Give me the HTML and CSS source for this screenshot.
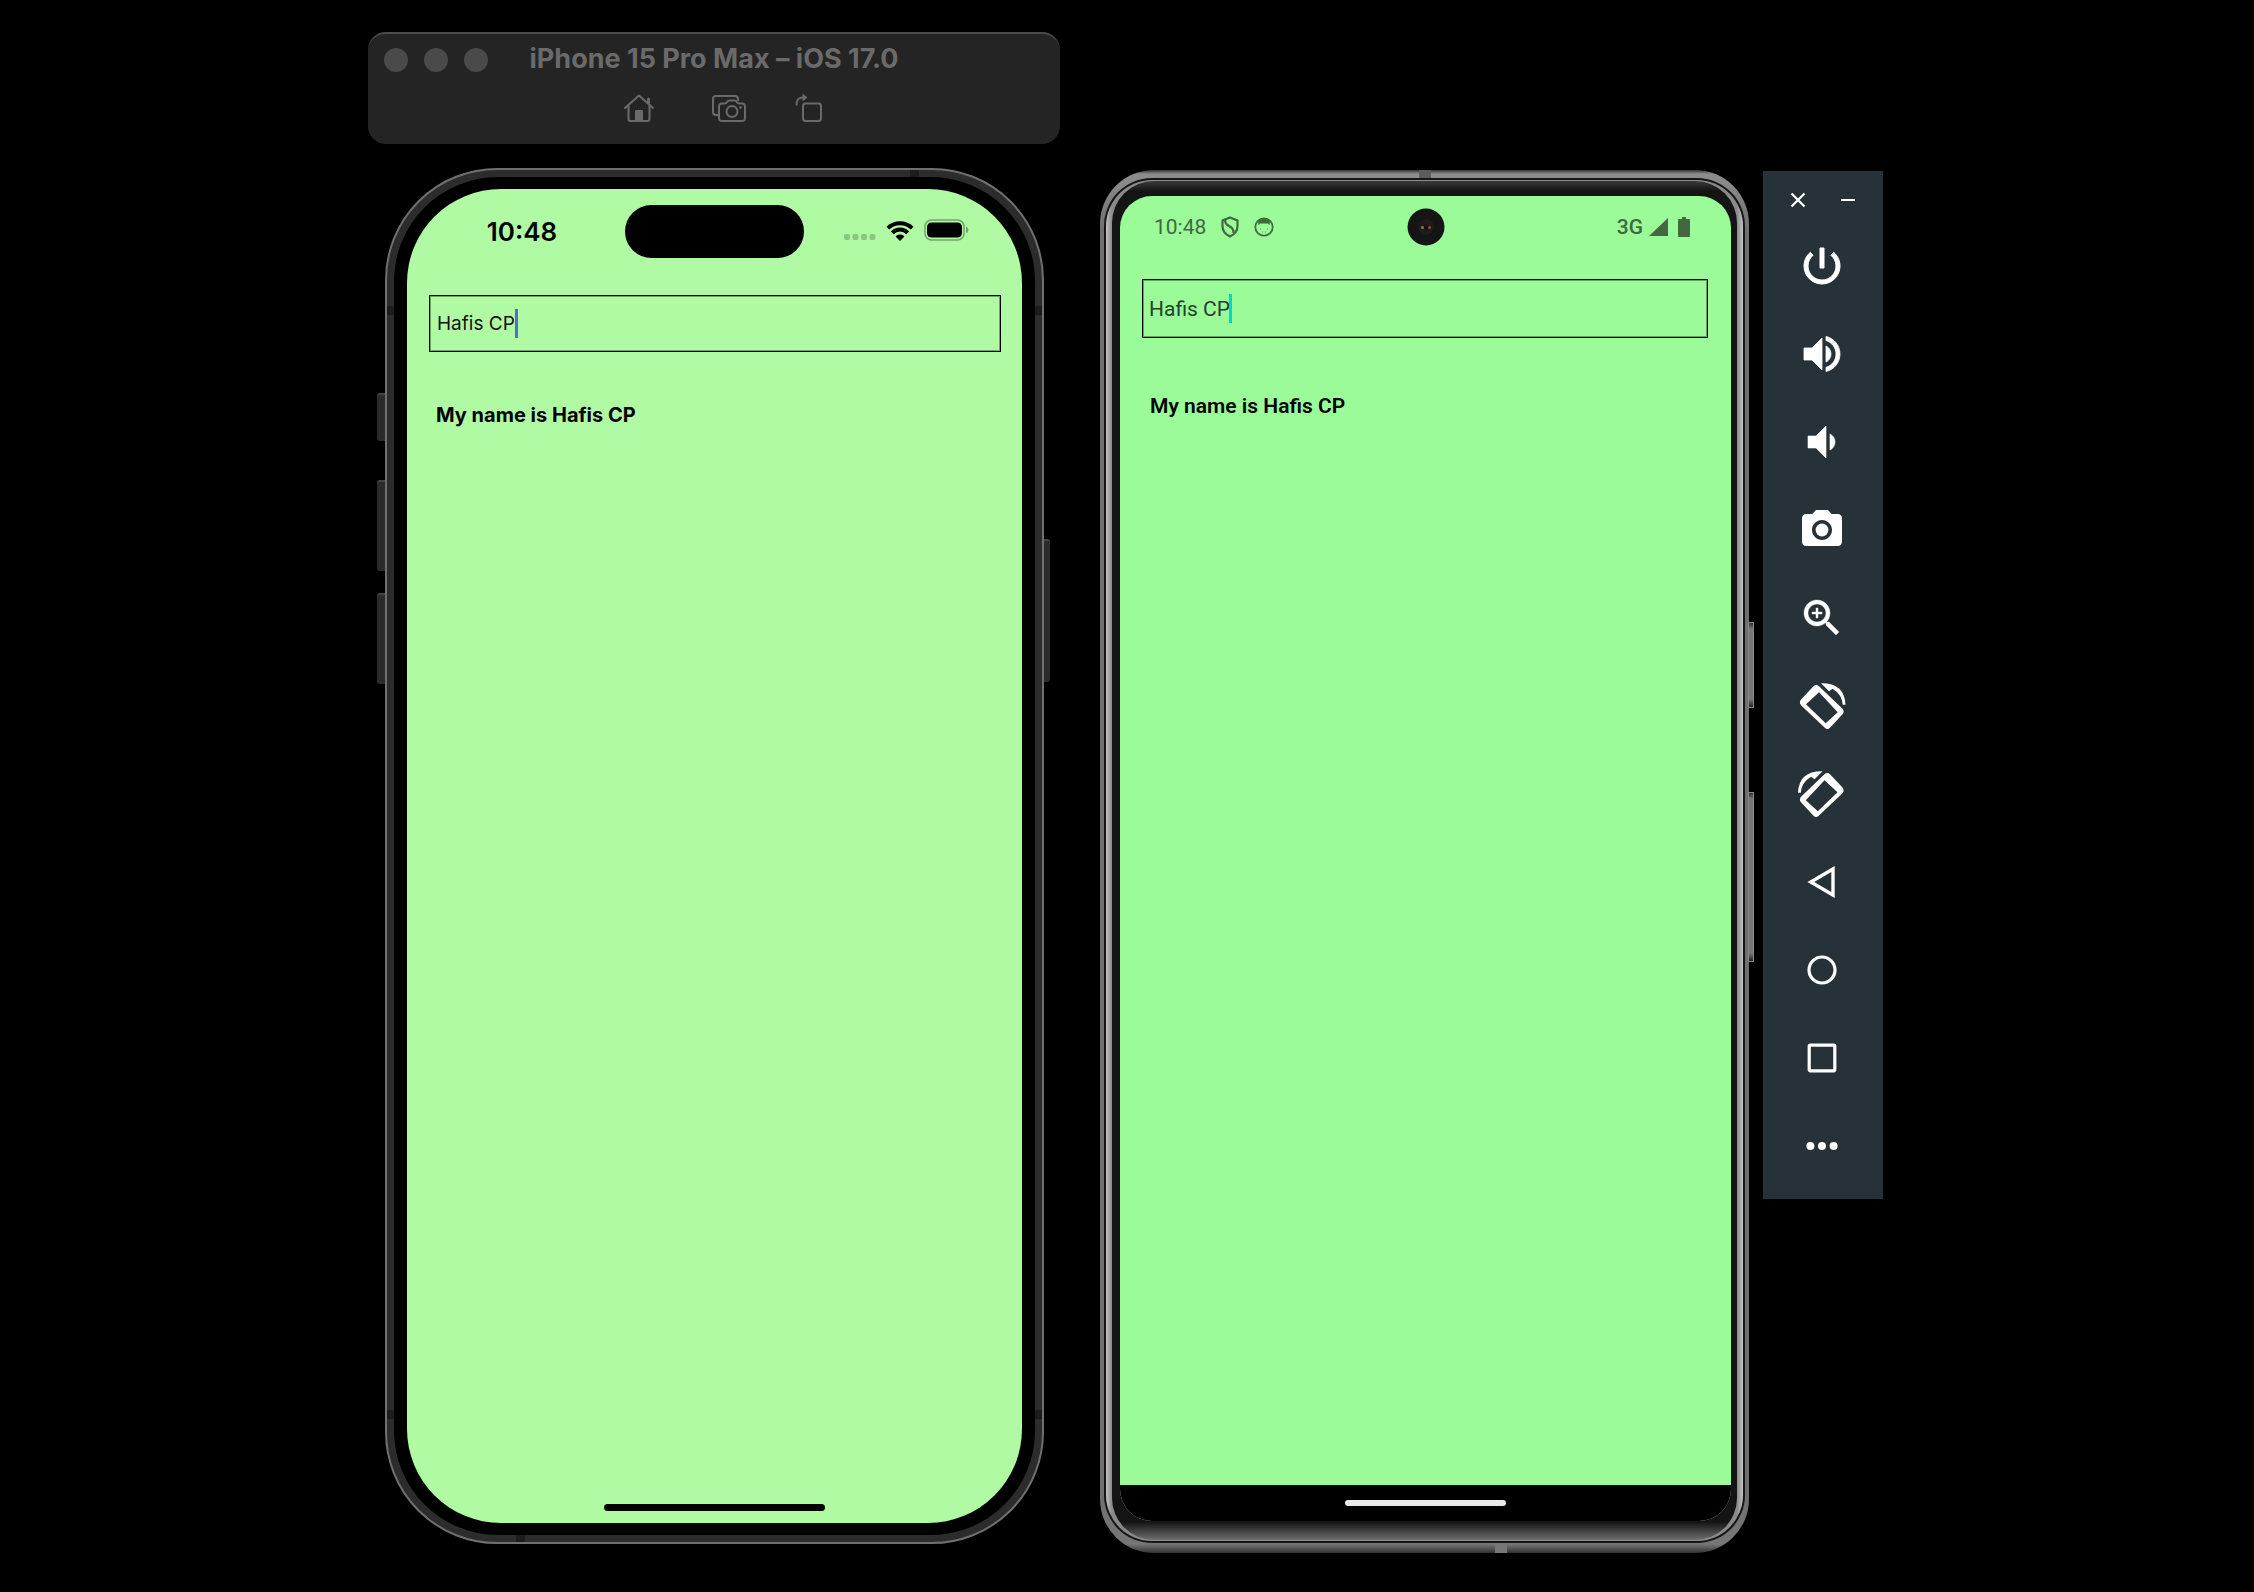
FILE: index.html
```html
<!DOCTYPE html>
<html lang="en">
<head>
<meta charset="utf-8">
<title>iPhone 15 Pro Max – iOS 17.0</title>
<meta name="viewport" content="width=device-width, initial-scale=1">
<link rel="stylesheet" href="styles.css">
</head>
<body>
<main class="stage">
  <section class="simulator">
    <header class="titlebar">
      <div class="titlebar-row">
        <div class="lights">
          <button class="light" aria-label="Close"></button>
          <button class="light" aria-label="Minimize"></button>
          <button class="light" aria-label="Zoom"></button>
        </div>
        <h1 class="title">iPhone 15 Pro Max – iOS 17.0</h1>
      </div>
      <div class="actions">
        <button class="action" aria-label="Home">
          <svg width="32" height="30" viewBox="0 0 32 30" fill="none" stroke="currentColor" stroke-width="2" stroke-linecap="round" stroke-linejoin="round"><path d="M2 15 L16 2.500 L30 15 M5.500 12.500 V26 Q5.500 28 7.500 28 H24.500 Q26.500 28 26.500 26 V12.500"/><path d="M25.500 10 V6"  stroke-width="3"/><path d="M13 28 V18 H19 V28 Z" fill="currentColor"/></svg>
        </button>
        <button class="action" aria-label="Screenshot">
          <svg width="36" height="30" viewBox="0 0 36 30" fill="none" stroke="currentColor" stroke-width="2" stroke-linejoin="round"><path d="M7 22 H5 Q2 22 2 19 V6 Q2 3 5 3 H24 Q27 3 27 6 V8"/><path d="M11 10.500 H14 Q15 10.500 16 9 Q17 7.500 18.500 7.500 H23.500 Q25 7.500 26 9 Q27 10.500 28 10.500 H31 Q34 10.500 34 13.500 V25 Q34 28 31 28 H11 Q8 28 8 25 V13.500 Q8 10.500 11 10.500 Z"/><circle cx="21" cy="18.500" r="5.500"/><circle cx="29.500" cy="14.500" r="1" fill="currentColor" stroke-width="1"/></svg>
        </button>
        <button class="action" aria-label="Rotate">
          <svg width="28" height="30" viewBox="0 0 28 30" fill="none" stroke="currentColor" stroke-width="2"><rect x="8" y="10.500" width="18" height="17.500" rx="2.500"/><path d="M1.500 12.500 C1.500 7 3 4.500 8 4.500"/><path d="M7.500 .5 L12.500 4.500 L7.500 8.500 Z" fill="currentColor" stroke="none"/></svg>
        </button>
      </div>
    </header>

    <div class="iphone">
      <span class="key key-action"></span>
      <span class="key key-up"></span>
      <span class="key key-down"></span>
      <span class="key key-side"></span>
      <div class="iphone-bezel">
        <div class="iphone-screen">
          <div class="ios-status">
            <time class="ios-time">10:48</time>
            <div class="island"></div>
            <div class="ios-icons">
              <svg width="32" height="8" viewBox="0 0 32 8" fill="#8cc782"><rect x="0" y="1" width="6" height="6" rx="2"/><rect x="8.500" y="1" width="6" height="6" rx="2"/><rect x="17" y="1" width="6" height="6" rx="2"/><rect x="25.500" y="1" width="6" height="6" rx="2"/></svg>
              <svg class="wifi" width="28" height="20" viewBox="0 0 28 20" fill="none" stroke="#000" stroke-width="4"><path d="M1.800 7.200 C8.500 .6 19.500 .6 26.200 7.200"/><path d="M6.300 11.800 C10.500 7.500 17.500 7.500 21.700 11.800"/><path d="M14 20 L9.600 15.400 C12.200 13 15.800 13 18.400 15.400 Z" fill="#000" stroke="none"/></svg>
              <svg class="cell" width="46" height="22" viewBox="0 0 46 22"><rect x="1" y="1" width="39" height="20" rx="6.500" fill="none" stroke="#75a56c" stroke-width="1.500"/><rect x="3" y="3.500" width="35" height="15" rx="4.500"/><path d="M42 7.500 Q44.500 8.500 44.500 11 Q44.500 13.500 42 14.500 Z" fill="#75a56c"/></svg>
            </div>
          </div>
          <div class="field ios-field">
            <input type="text" value="Hafis CP" aria-label="Name">
            <span class="caret"></span>
          </div>
          <p class="message">My name is Hafis CP</p>
          <div class="home-bar"></div>
        </div>
      </div>
    </div>
  </section>

  <section class="emulator">
    <div class="android">
      <span class="rocker rocker-power"></span>
      <span class="rocker rocker-volume"></span>
      <div class="android-seam">
        <div class="android-rim">
          <div class="android-glass">
            <div class="android-screen">
              <div class="android-status">
                <div class="android-left">
                  <time>10:48</time>
                  <svg width="18" height="22" viewBox="0 0 18 22" fill="none" stroke="currentColor" stroke-width="2.200"><path d="M9 1.500 L16.500 4.500 V10 Q16.500 17 9 20.500 Q1.500 17 1.500 10 V4.500 Z"/><path d="M4 4 Q4 8 8 10 Q13 12.500 12.500 17"/></svg>
                  <svg width="20" height="20" viewBox="0 0 20 20" fill="none" stroke="currentColor"><circle cx="10" cy="10" r="8.700" stroke-width="1.800"/><path d="M4 3.500 L10 1 L16 3.500 L15.500 8 L13.500 6.500 H6.500 L4.500 8 Z" fill="currentColor" stroke="none"/><path d="M6 12 H7 M13 12 H14 M8 15 H9 M11 15 H12" stroke-opacity=".6"/></svg>
                </div>
                <svg class="lens" width="38" height="38" viewBox="0 0 38 38"><circle cx="19" cy="19" r="18.500" fill="#151515"/><circle cx="19" cy="19" r="8" fill="#1d1b1c"/><circle cx="15.500" cy="19.500" r="1.500" fill="#8f7c2c"/><circle cx="22.500" cy="19.500" r="1.500" fill="#a5452b"/><circle cx="19" cy="19.500" r="2" fill="#111"/></svg>
                <div class="android-right">
                  <span class="network">3G</span>
                  <svg width="19" height="18" viewBox="0 0 19 18"><path d="M19 0 V18 H0 Z" fill="currentColor"/></svg>
                  <svg class="android-cell" width="12" height="20" viewBox="0 0 12 20"><path d="M4 0 H8 V2 H11 Q12 2 12 3 V19 Q12 20 11 20 H1 Q0 20 0 19 V3 Q0 2 1 2 H4 Z" fill="currentColor"/></svg>
                </div>
              </div>
              <div class="field android-field">
                <input type="text" value="Hafis CP" aria-label="Name">
                <span class="caret"></span>
              </div>
              <p class="message">My name is Hafis CP</p>
              <div class="nav-bar"><span class="nav-handle"></span></div>
            </div>
          </div>
        </div>
      </div>
    </div>
  </section>

  <aside class="toolbar" aria-label="Emulator controls">
    <div class="window-buttons">
      <button aria-label="Close"><svg width="16" height="16" viewBox="0 0 16 16" stroke="#fff" stroke-width="2.200"><path d="M1.500 1.500 L14.500 14.500 M14.500 1.500 L1.500 14.500"/></svg></button>
      <button aria-label="Minimize"><svg width="16" height="16" viewBox="0 0 16 16" stroke="#fff" stroke-width="2"><path d="M1 8 H15"/></svg></button>
    </div>
    <button class="tool" aria-label="Power"><svg viewBox="0 0 24 24"><path d="M13 3h-2v10h2V3zm4.830 2.170l-1.420 1.420C17.990 7.860 19 9.810 19 12c0 3.870-3.130 7-7 7s-7-3.130-7-7c0-2.190 1.010-4.140 2.580-5.420L6.170 5.170C4.230 6.820 3 9.260 3 12c0 4.970 4.030 9 9 9s9-4.030 9-9c0-2.740-1.230-5.180-3.170-6.830z" stroke="#fff" stroke-width=".5"/></svg></button>
    <button class="tool" aria-label="Volume up"><svg viewBox="0 0 24 24"><path d="M3 9v6h4l5 5V4L7 9H3zm13.500 3c0-1.770-1.020-3.290-2.500-4.030v8.050c1.480-.73 2.500-2.250 2.500-4.020zM14 3.230v2.060c2.890.86 5 3.540 5 6.710s-2.110 5.850-5 6.710v2.060c4.010-.91 7-4.490 7-8.770s-2.990-7.860-7-8.770z" stroke="#fff" stroke-width=".4"/></svg></button>
    <button class="tool" aria-label="Volume down"><svg viewBox="0 0 24 24"><path d="M18.500 12c0-1.770-1.020-3.290-2.500-4.030v8.050c1.480-.73 2.500-2.250 2.500-4.020zM5 9v6h4l5 5V4L9 9H5z" stroke="#fff" stroke-width=".3"/></svg></button>
    <button class="tool" aria-label="Take screenshot"><svg viewBox="0 0 24 24"><circle cx="12" cy="12" r="3.200"/><path d="M9 2L7.170 4H4c-1.100 0-2 .9-2 2v12c0 1.100.9 2 2 2h16c1.100 0 2-.9 2-2V6c0-1.100-.9-2-2-2h-3.170L15 2H9zm3 15c-2.760 0-5-2.240-5-5s2.240-5 5-5 5 2.240 5 5-2.240 5-5 5z"/></svg></button>
    <button class="tool" aria-label="Zoom"><svg viewBox="0 0 24 24"><path d="M15.500 14h-.79l-.28-.27C15.410 12.590 16 11.110 16 9.500 16 5.910 13.090 3 9.500 3S3 5.910 3 9.500 5.910 16 9.500 16c1.610 0 3.090-.59 4.230-1.570l.27.28v.79l5 4.990L20.490 19l-4.990-5zm-6 0C7.010 14 5 11.990 5 9.500S7.010 5 9.500 5 14 7.010 14 9.500 11.990 14 9.500 14zm2.500-4h-2v2H9v-2H7V9h2V7h1v2h2v1z" stroke="#fff" stroke-width=".2"/></svg></button>
    <button class="tool" aria-label="Rotate left"><svg viewBox="0 0 48 48"><g id="turn"><path fill-rule="evenodd" d="M15.500 4.200 Q18.200 2 21 4.200 L44.500 26.700 Q46.800 29.500 44.500 32.200 L32 45.800 Q29.500 48.200 26.800 45.800 L3 23.200 Q.8 20.500 3 17.500 Z M21 10.300 L8 22.300 L27.700 41.300 L39.700 30.300 Z"/><path d="M23 1.300 Q46.500 1 47.500 22.700 H44.700 Q44 12.500 34.500 6.800 L31 9.300 Z"/></g></svg></button>
    <button class="tool" aria-label="Rotate right"><svg viewBox="0 0 48 48"><use href="#turn" transform="matrix(-1 0 0 1 47.500 0)"/></svg></button>
    <button class="tool" aria-label="Back"><svg viewBox="0 0 24 24"><path d="M17.500 5.500 V18.500 L6.400 12 Z" fill="none" stroke="#fff" stroke-width="1.700"/></svg></button>
    <button class="tool" aria-label="Home"><svg viewBox="0 0 24 24"><circle cx="12" cy="12" r="6.500" fill="none" stroke="#fff" stroke-width="1.600"/></svg></button>
    <button class="tool" aria-label="Overview"><svg viewBox="0 0 24 24"><rect x="5.600" y="5.600" width="12.800" height="12.800" rx=".6" fill="none" stroke="#fff" stroke-width="1.600"/></svg></button>
    <button class="tool" aria-label="More"><svg viewBox="0 0 24 24"><circle cx="6.200" cy="12" r="2"/><circle cx="12" cy="12" r="2"/><circle cx="17.800" cy="12" r="2"/></svg></button>
  </aside>
</main>
</body>
</html>
```
FILE: styles.css
```css
* { box-sizing: border-box; }

body {
  margin: 0;
  background: #000;
  font-family: Inter, "Liberation Sans", sans-serif;
}

button {
  margin: 0;
  padding: 0;
  border: 0;
  background: none;
  color: inherit;
  cursor: pointer;
}

svg { display: block; }

.stage {
  display: flex;
  justify-content: center;
  align-items: flex-start;
  padding: 32px 3px 32px 0;
}

/* Simulator window */
.simulator {
  display: flex;
  flex-direction: column;
  gap: 24px;
  flex: 0 1 692px;
  margin-right: 40px;
}

.titlebar {
  height: 112px;
  border-top: 2px solid #4b4b4b;
  border-radius: 18px;
  background: #242424;
  color: #6a6a6a;
}

.titlebar-row {
  display: grid;
  grid-template-columns: 1fr auto 1fr;
  align-items: center;
  height: 52px;
  padding: 0 16px;
}

.lights {
  display: flex;
  gap: 16px;
}

.light {
  width: 24px;
  height: 24px;
  border-radius: 50%;
  background: #4a4a4a;
}

.title {
  margin: -2px 0 0;
  font-size: 27px;
  line-height: 32px;
  font-weight: 700;
  white-space: nowrap;
}

.actions {
  display: flex;
  justify-content: center;
  gap: 52px;
  padding: 7px 0 0 18px;
}

.action:nth-child(2) { margin-left: 4px; }
.action:nth-child(3) { margin-left: -4px; }

/* iPhone */
.iphone {
  position: relative;
  display: flex;
  margin: 0 16px 0 17px;
  aspect-ratio: 659 / 1376;
  padding: 7px;
  border: 2px solid #6f6f6f;
  border-radius: 112px;
  background:
    linear-gradient(#1c1c1c, #1c1c1c) 81% 0 / 9px 9px,
    linear-gradient(#1c1c1c, #1c1c1c) 0 10% / 9px 9px,
    linear-gradient(#1c1c1c, #1c1c1c) 100% 10% / 9px 9px,
    linear-gradient(#1c1c1c, #1c1c1c) 0 91% / 9px 9px,
    linear-gradient(#1c1c1c, #1c1c1c) 100% 91% / 9px 9px,
    linear-gradient(#1c1c1c, #1c1c1c) 20% 100% / 9px 9px,
    #2c2c2c;
  background-repeat: no-repeat;
}

.iphone-bezel {
  display: flex;
  flex: 1;
  padding: 12px 13px;
  border-radius: 104px;
  background: #000;
}

.iphone-screen {
  display: flex;
  flex-direction: column;
  flex: 1;
  min-width: 0;
  padding: 16px 0 12px;
  border-radius: 94px;
  background: #affaa2;
}

.key {
  position: absolute;
  left: -10px;
  width: 8px;
  border-top: 2px solid #444;
  border-radius: 3px 0 0 3px;
  background: #2b2b2b;
}

.key-action { top: 223px; height: 48px; }
.key-up { top: 310px; height: 91px; }
.key-down { top: 423px; height: 91px; }
.key-side {
  top: 369px;
  left: auto;
  right: -8px;
  width: 6px;
  height: 143px;
  border-radius: 0 3px 3px 0;
}

.ios-status {
  display: grid;
  grid-template-columns: 1fr 179px 1fr;
  align-items: center;
}

.ios-time {
  padding-left: 12px;
  font-size: 26px;
  font-weight: 600;
  line-height: 32px;
  text-align: center;
}

.island {
  height: 53px;
  border-radius: 27px;
  background: #000;
}

.ios-icons {
  display: flex;
  justify-content: center;
  align-items: flex-end;
  gap: 10px;
  padding: 0 12px 3px 0;
}

.field {
  position: relative;
  display: flex;
}

.field input {
  flex: 1;
  min-width: 0;
  margin: 0;
  border: 1px solid #000;
  box-shadow: inset 0 0 0 1px rgb(0 0 0 / 35%);
  border-radius: 0;
  outline: 0;
  background: transparent;
  font-family: inherit;
}

.caret {
  position: absolute;
  width: 3px;
  height: 29px;
}

.ios-field {
  height: 57px;
  margin: 37px 21px 0 22px;
}

.ios-field input { padding: 0 7px; color: #111; font-size: 19px; }
.ios-field .caret { left: 86px; top: 14px; background: #4a6fdc; }

.message {
  margin: 0;
  line-height: 24px;
}

.iphone .message {
  margin: 51px 29px 0;
  font-size: 20px;
  font-weight: 700;
}

.home-bar {
  align-self: center;
  width: 36%;
  height: 7px;
  margin-top: auto;
  border-radius: 4px;
  background: #000;
}

/* Android device */
.emulator {
  flex: 0 1 649px;
  min-width: 0;
  margin: 138px 14px 0 0;
  font-family: Roboto, sans-serif;
}

.android {
  position: relative;
  display: flex;
  aspect-ratio: 649 / 1383;
  padding: 8px 4px 10px;
  border-radius: 54px;
  background:
    linear-gradient(#5c5c5c, #5c5c5c) 50% 0 / 12px 9px no-repeat,
    linear-gradient(#777, #777) 62% 100% / 12px 10px no-repeat,
    linear-gradient(#333 0, #8c8c8c 4px, #8c8c8c 8px, #6f6f6f 60px, #6f6f6f 1320px, #777 1374px, #333 100%);
}

.android > div,
.android-rim,
.android-glass { display: flex; flex: 1; min-width: 0; }

.android-seam {
  padding: 2px;
  border-radius: 48px;
  background: #161616;
}

.android-rim {
  padding: 1px 6px;
  border-radius: 46px;
  background: linear-gradient(90deg, #c4c4c4, #8a8a8a 6px, #8a8a8a calc(100% - 6px), #c4c4c4);
}

.android-glass {
  padding: 15px 6px 19px 8px;
  border-radius: 42px;
  background: linear-gradient(#3a3a3a, #141414 10px, #141414 calc(100% - 18px), #6e6e6e);
}

.android-screen {
  display: flex;
  flex-direction: column;
  flex: 1;
  min-width: 0;
  overflow: hidden;
  border-radius: 32px;
  background: #9afb98;
}

.rocker {
  position: absolute;
  right: -5px;
  width: 6px;
  border: 1px solid #8a8a8a;
  background: linear-gradient(#333, #777 6px, #777 calc(100% - 8px), #222);
}

.rocker-power { top: 452px; height: 86px; }
.rocker-volume { top: 622px; height: 170px; }

.android-status {
  display: grid;
  grid-template-columns: 1fr 38px 1fr;
  align-items: center;
  padding-top: 12px;
  color: #41683f;
  font-size: 21px;
  line-height: 24px;
}

.android-left {
  display: flex;
  align-items: center;
  gap: 15px;
  padding-left: 34px;
}

.android-right {
  display: flex;
  justify-content: flex-end;
  align-items: center;
  gap: 6px;
  padding-right: 41px;
}

.network { font-weight: 500; }
.android-cell { margin-left: 4px; }

.android-field {
  height: 59px;
  margin: 33px 23px 0 22px;
}

.android-field input { padding: 0 6px; color: #24402a; font-size: 21px; }
.android-field .caret { left: 87px; top: 15px; background: #00d9c8; }

.android .message {
  margin: 56px 30px 0;
  font-size: 21px;
  font-weight: 600;
}

.nav-bar {
  display: flex;
  justify-content: center;
  align-items: center;
  height: 36px;
  margin-top: auto;
  background: #000;
}

.nav-handle {
  width: 161px;
  height: 6px;
  border-radius: 3px;
  background: #e9e9e9;
}

/* Emulator toolbar */
.toolbar {
  display: flex;
  flex-direction: column;
  flex: 0 0 120px;
  margin-top: 139px;
  padding: 0 0 9px;
  background: #273238;
}

.window-buttons {
  display: flex;
  justify-content: center;
  align-items: center;
  gap: 34px;
  height: 51px;
  padding-top: 6px;
}

.tool {
  display: flex;
  justify-content: center;
  align-items: center;
  height: 88px;
}

.tool svg {
  width: 48px;
  height: 48px;
  fill: #fff;
  margin-right: 2px;
  overflow: visible;
}
```
